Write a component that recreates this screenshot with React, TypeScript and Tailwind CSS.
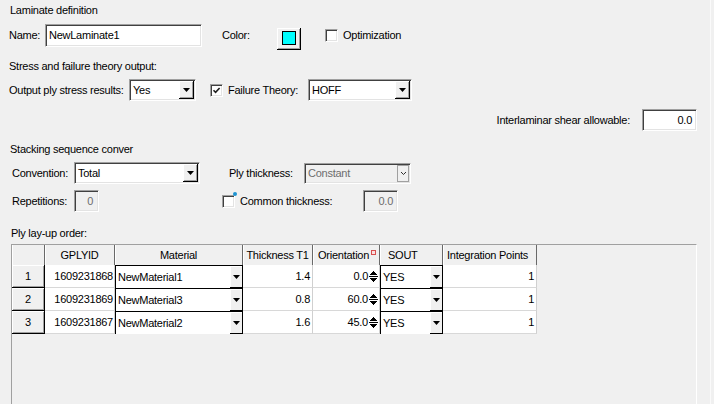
import React from "react";

const sunken =
  "border border-t-[#a0a0a0] border-l-[#a0a0a0] border-r-white border-b-white shadow-[inset_1px_1px_0_#404040,inset_-1px_-1px_0_#e3e3e3]";
const raised =
  "bg-[#f0f0f0] border-r border-b border-r-black border-b-black shadow-[inset_1px_1px_0_#ffffff,inset_-1px_-1px_0_#a0a0a0]";

const Tri = () => (
  <svg width="7" height="5" viewBox="0 0 7 5">
    <path d="M0 1h7L3.5 5z" fill="#000" />
  </svg>
);

const DropBtn = ({ w = "w-[15px]" }: { w?: string }) => (
  <div className={`${w} h-full flex items-center justify-center ${raised}`}>
    <Tri />
  </div>
);

const Select = ({ w, text }: { w: string; text: string }) => (
  <div className={`${w} h-[22px] bg-white ${sunken} flex p-[1px]`}>
    <span className="flex-1 flex items-center pl-[2px]">{text}</span>
    <DropBtn />
  </div>
);

const Check = ({ checked, cls = "" }: { checked?: boolean; cls?: string }) => (
  <div className={`w-[13px] h-[13px] bg-white ${sunken} flex items-center justify-center ${cls}`}>
    {checked && (
      <svg width="9" height="9" viewBox="0 0 9 9">
        <path d="M1.5 4.2 L3.6 6.4 L7.6 2" stroke="#202020" strokeWidth="1.6" fill="none" />
      </svg>
    )}
  </div>
);

const Spin = () => (
  <svg width="9" height="15" viewBox="0 0 9 15" className="shrink-0 ml-[1px]" shapeRendering="crispEdges">
    <path d="M4.5 2 L8 6 H1 z" fill="#000" />
    <rect x="0" y="7" width="9" height="1" fill="#000" />
    <path d="M1 9 H8 L4.5 13 z" fill="#000" />
  </svg>
);

const CellCombo = ({ text }: { text: string }) => (
  <div className="h-full flex bg-white border-l border-t border-l-black border-t-black">
    <span className="flex-1 flex items-center pl-[2px]">{text}</span>
    <div className="w-[13px] h-full flex items-center justify-center bg-[#f0f0f0] border-r border-b border-r-black border-b-black shadow-[inset_1px_1px_0_#ffffff]">
      <Tri />
    </div>
  </div>
);

const rows = [
  { n: "1", id: "1609231868", mat: "NewMaterial1", t: "1.4", o: "0.0" },
  { n: "2", id: "1609231869", mat: "NewMaterial3", t: "0.8", o: "60.0" },
  { n: "3", id: "1609231867", mat: "NewMaterial2", t: "1.6", o: "45.0" },
];

const hdr = "h-full bg-[#f0f0f0] border-r border-r-[#696969] shadow-[inset_1px_0_0_#ffffff] flex items-center";
const cell = "h-full bg-white border-r border-b border-r-[#d0d0d0] border-b-[#d8d8d8] flex items-center";

export default function App() {
  return (
    <div className="w-[714px] h-[404px] bg-[#f0f0f0] overflow-hidden font-['Liberation_Sans',Arial,sans-serif] text-[11px] leading-[13px] tracking-[-0.25px] whitespace-nowrap text-black flex">
      <div className="w-[711px] h-full flex flex-col border-r border-r-[#fafafa]">
        <div className="mt-[4px] h-[13px] pl-[10px]">Laminate definition</div>

        <div className="mt-[7px] h-[23px] flex items-center">
          <span className="ml-[9px] w-[36px]">Name:</span>
          <div className={`w-[157px] h-[23px] bg-white ${sunken} flex items-center pl-[3px]`}>NewLaminate1</div>
          <span className="ml-[20px] w-[55px]">Color:</span>
          <div className={`mt-[6px] w-[24px] h-[22px] ${raised} flex items-center justify-center`}>
            <div className="w-[14px] h-[14px] bg-[#00ffff] border border-black" />
          </div>
          <Check cls="ml-[24px]" />
          <span className="ml-[5px]">Optimization</span>
        </div>

        <div className="mt-[13px] h-[13px] pl-[9px]">Stress and failure theory output:</div>

        <div className="mt-[6px] h-[22px] flex items-center">
          <span className="ml-[9px] w-[120px]">Output ply stress results:</span>
          <Select w="w-[67px]" text="Yes" />
          <Check checked cls="ml-[14px]" />
          <span className="ml-[5px] w-[80px]">Failure Theory:</span>
          <Select w="w-[104px]" text="HOFF" />
        </div>

        <div className="mt-[8px] h-[22px] flex items-center justify-end pr-[13px]">
          <span>Interlaminar shear allowable:</span>
          <div className={`ml-[12px] w-[55px] h-[22px] bg-white ${sunken} flex items-center justify-end pr-[4px]`}>0.0</div>
        </div>

        <div className="mt-[12px] h-[13px] pl-[10px]">Stacking sequence conver</div>

        <div className="mt-[6px] h-[22px] flex items-center">
          <span className="ml-[12px] w-[62px]">Convention:</span>
          <Select w="w-[126px]" text="Total" />
          <span className="ml-[29px] w-[75px]">Ply thickness:</span>
          <div className={`w-[107px] h-[21px] bg-[#f0f0f0] ${sunken} flex p-[1px] text-[#6d6d6d]`}>
            <span className="flex-1 flex items-center pl-[2px]">Constant</span>
            <div className="w-[12px] h-full border border-[#a0a0a0] bg-[#f0f0f0] flex items-center justify-center">
              <svg width="7" height="5" viewBox="0 0 7 5">
                <path d="M1 1 L3.5 3.5 L6 1" stroke="#303030" strokeWidth="1" fill="none" />
              </svg>
            </div>
          </div>
        </div>

        <div className="mt-[6px] h-[22px] flex items-center">
          <span className="ml-[12px] w-[62px]">Repetitions:</span>
          <div className={`w-[25px] h-[22px] bg-[#f0f0f0] ${sunken} flex items-center justify-end pr-[5px] text-[#6d6d6d]`}>0</div>
          <div className="ml-[123px] relative">
            <Check />
            <div className="absolute -top-[3px] -right-[2px] w-[4px] h-[4px] rounded-full bg-[#1e94d2]" />
          </div>
          <span className="ml-[5px] w-[123px]">Common thickness:</span>
          <div className={`w-[35px] h-[22px] bg-[#f0f0f0] ${sunken} flex items-center justify-end pr-[4px] text-[#6d6d6d]`}>0.0</div>
        </div>

        <div className="mt-[15px] h-[13px] pl-[11px]">Ply lay-up order:</div>

        <div className="mt-[4px] ml-[11px] w-[686px] flex-1 border-t border-l border-t-[#a0a0a0] border-l-[#a0a0a0] border-r border-r-white flex flex-col">
          <div className="flex h-[20px]">
            <div className={`${hdr} w-[33px]`} />
            <div className={`${hdr} w-[70px] justify-center`}>GPLYID</div>
            <div className={`${hdr} w-[128px] justify-center`}>Material</div>
            <div className={`${hdr} w-[70px] justify-center`}>Thickness T1</div>
            <div className={`${hdr} w-[67px] pl-[5px]`}>
              <span>Orientation</span>
              <span className="ml-[2px] mb-[5px] w-[5px] h-[5px] border border-[#d85050] bg-[#fbe0e0]" />
            </div>
            <div className={`${hdr} w-[63px] pl-[8px]`}>SOUT</div>
            <div className={`${hdr} w-[94px] pl-[4px]`}>Integration Points</div>
          </div>
          {rows.map((r) => (
            <div key={r.n} className="flex h-[23px]">
              <div className={`w-[33px] h-full ${raised} flex items-center justify-center`}>{r.n}</div>
              <div className={`${cell} w-[70px] justify-end pr-[1px]`}>{r.id}</div>
              <div className="w-[128px] h-full">
                <CellCombo text={r.mat} />
              </div>
              <div className={`${cell} w-[70px] justify-end pr-[2px]`}>{r.t}</div>
              <div className={`${cell} w-[67px] justify-end pr-[1px]`}>
                <span>{r.o}</span>
                <Spin />
              </div>
              <div className="w-[63px] h-full">
                <CellCombo text="YES" />
              </div>
              <div className={`${cell} w-[94px] justify-end pr-[2px]`}>1</div>
            </div>
          ))}
        </div>
      </div>
    </div>
  );
}
